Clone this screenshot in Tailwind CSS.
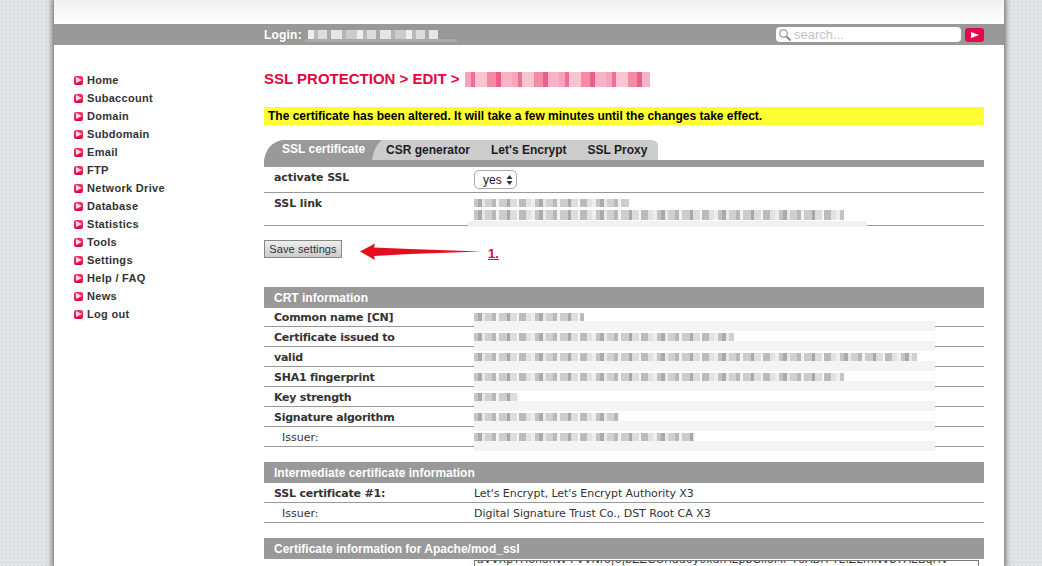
<!DOCTYPE html>
<html lang="en">
<head>
  <meta charset="UTF-8" />
  <title>SSL Protection</title>
  <script src="https://cdn.jsdelivr.net/npm/@tailwindcss/browser@4"></script>
</head>
<body class="h-[566px] overflow-hidden bg-[#e3e4e6] bg-[radial-gradient(#d9dadc_1px,transparent_1px)] bg-[length:4px_4px] font-['Liberation_Sans',sans-serif]">
  <div class="ml-[54px] w-[950px] h-[566px] overflow-hidden bg-white shadow-[0_0_5px_2px_#777]">
    <!-- top -->
    <div class="h-[24px] bg-gradient-to-b from-[#f1f1f1] to-white"></div>
    <div class="h-[21px] bg-[#999] flex items-center pl-[210px] pr-[20px]">
      <span class="text-[12px] font-bold text-white tracking-[0.2px]">Login:</span>
      <span class="relative ml-[6px] w-[130px] h-[9px] blur-[0.7px] bg-[repeating-linear-gradient(90deg,#eee_0_6px,#bbb_6px_10px,#ddd_10px_19px,#aaa_19px_23px,#e6e6e6_23px_34px,#b4b4b4_34px_38px,#ccc_38px_49px)]">
        <span class="absolute left-[-3px] top-[9px] w-[152px] h-[3px] bg-[#aaa]"></span>
      </span>
      <div class="ml-auto flex items-center gap-[4px]">
        <div class="w-[185px] h-[15px] bg-white rounded-[4px] flex items-center pl-[2px] gap-[2px]">
          <svg width="14" height="14" viewBox="0 0 14 14" fill="none" stroke="#aaa"><circle cx="5.500" cy="5.500" r="3.800" stroke-width="1.500"/><path d="M8.500 8.500l4 4" stroke="#888" stroke-width="2"/></svg>
          <span class="text-[13px] text-[#c4c4c4] leading-none">search...</span>
        </div>
        <div class="w-[19px] h-[14px] bg-[#e5094a] rounded-[3px] flex items-center justify-center">
          <svg width="8" height="6" viewBox="0 0 8 6"><path d="M0 0l8 3-8 3z" fill="#fff"/></svg>
        </div>
      </div>
    </div>

    <div class="flex">
      <!-- nav -->
      <ul id="nav" class="w-[210px] pl-[20px] pt-[26px] shrink-0"></ul>

      <!-- content -->
      <main class="w-[720px] pt-[25px]">
        <h1 class="flex items-center h-[18px] text-[15px] font-bold text-[#e3063f]">
          SSL PROTECTION &gt; EDIT &gt;
          <span class="ml-[5px] w-[185px] h-[15px] blur-[0.5px] bg-[repeating-linear-gradient(90deg,#f7a3bb_0_6px,#f06f94_6px_10px,#fbc4d3_10px_22px,#f48aa8_22px_31px,#ec5f88_31px_36px,#f9b3c7_36px_47px)]"></span>
        </h1>
        <div class="mt-[19px] h-[18px] pl-[4px] flex items-center bg-[#ffff33] text-[12px] font-bold text-black">The certificate has been altered. It will take a few minutes until the changes take effect.</div>

        <!-- tabs -->
        <div class="mt-[15px] flex h-[20px] text-[12px] font-bold">
          <div class="relative z-10 w-[118px] h-[20px] pl-[18px] bg-[#999] text-white [clip-path:path('M0_20Q3_3_18_0L118_0Q110_6_108_20Z')]">SSL certificate</div>
          <div class="-ml-[10px] w-[286px] h-[20px] pl-[14px] pt-[1px] flex gap-[21px] bg-[#ccc] text-[#1c1c1c] rounded-tr-[6px]">
            <span>CSR generator</span><span>Let's Encrypt</span><span>SSL Proxy</span>
          </div>
        </div>
        <div class="h-[7px] bg-[#999]"></div>

        <div class="flex h-[26px] border-b border-[#999] text-[11px] text-[#333]">
          <div class="w-[210px] pl-[10px] pt-[3px] font-bold tracking-[-0.1px] font-['DejaVu_Sans',sans-serif]">activate SSL</div>
          <div class="pt-[3px]">
            <div class="w-[43px] h-[19px] pl-[8px] pr-[3px] flex items-center justify-between border border-[#aaa] rounded-[5px] text-[12px] text-[#222]">yes
              <svg width="7" height="10" viewBox="0 0 7 10" fill="#333"><path d="M3.500 0l3 4h-6zM3.500 10l3-4h-6z"/></svg>
            </div>
          </div>
        </div>
        <div class="relative flex h-[33px] border-b border-[#999] text-[11px] text-[#333]">
          <div class="w-[210px] pl-[10px] pt-[3px] font-bold tracking-[-0.1px] font-['DejaVu_Sans',sans-serif]">SSL link</div>
          <div class="pt-[6px]">
            <div class="w-[155px] h-[8px] blur-[0.7px] bg-[repeating-linear-gradient(90deg,#c4c4c4_0_4px,#aaa_4px_8px,#e8e8e8_8px_11px,#d0d0d0_11px_18px,#b8b8b8_18px_22px,#f2f2f2_22px_25px,#ccc_25px_33px,#a8a8a8_33px_36px,#ddd_36px_43px,#f6f6f6_43px_45px,#bbb_45px_52px,#e2e2e2_52px_57px,#eee_57px_61px)]"></div>
            <div class="mt-[3px] w-[370px] h-[10px] blur-[0.7px] bg-[repeating-linear-gradient(90deg,#c4c4c4_0_4px,#aaa_4px_8px,#e8e8e8_8px_11px,#d0d0d0_11px_18px,#b8b8b8_18px_22px,#f2f2f2_22px_25px,#ccc_25px_33px,#a8a8a8_33px_36px,#ddd_36px_43px,#f6f6f6_43px_45px,#bbb_45px_52px,#e2e2e2_52px_57px,#eee_57px_61px)]"></div>
          </div>
          <div class="absolute left-[204px] top-[28px] w-[399px] h-[6px] bg-[#f1f1f1]"></div>
        </div>

        <div class="mt-[14px] h-[24px] flex items-start">
          <button class="w-[78px] h-[18px] border border-[#888] bg-gradient-to-b from-[#eee] to-[#ccc] text-[11px] text-[#333] tracking-[0.1px]">Save settings</button>
          <svg class="ml-[18px] mt-[3px]" width="122" height="18" viewBox="0 0 122 18"><path d="M0 8.500L15 .5 14 4.500 50 6 121 8.500 50 11 14 13 15 17z" fill="#e30f20"/></svg>
          <span class="ml-[6px] mt-[4px] text-[13px] font-bold text-[#e3063f] underline">1.</span>
        </div>

        <section class="mt-[23px]">
          <h2 class="h-[21px] pl-[10px] flex items-center bg-[#999] text-[12px] font-bold text-white">CRT information</h2>
          <div id="crt" class="-mt-px"></div>
        </section>

        <section class="mt-[15px]">
          <h2 class="h-[21px] pl-[10px] flex items-center bg-[#999] text-[12px] font-bold text-white">Intermediate certificate information</h2>
          <div class="flex h-[20px] pt-[4px] items-center border-b border-[#999] text-[11px] text-[#333] font-['DejaVu_Sans',sans-serif]">
            <div class="w-[210px] pl-[10px] font-bold tracking-[-0.2px]">SSL certificate #1:</div>
            <div class="tracking-[-0.07px]">Let's Encrypt, Let's Encrypt Authority X3</div>
          </div>
          <div class="flex h-[20px] pt-[4px] items-center border-b border-[#999] text-[11px] text-[#333] font-['DejaVu_Sans',sans-serif]">
            <div class="w-[210px] pl-[18px]">Issuer:</div>
            <div class="tracking-[-0.03px]">Digital Signature Trust Co., DST Root CA X3</div>
          </div>
        </section>

        <section class="mt-[15px]">
          <h2 class="h-[21px] pl-[10px] flex items-center bg-[#999] text-[12px] font-bold text-white">Certificate information for Apache/mod_ssl</h2>
          <div class="flex text-[11px] text-[#333] font-['DejaVu_Sans',sans-serif]">
            <div class="w-[210px] pl-[10px] pt-[4px] font-bold">CSR</div>
            <div class="mt-px w-[505px] h-[40px] border border-[#777] pl-[2px] leading-none overflow-hidden whitespace-nowrap"><div class="-mt-[7px]">aVVXpTHohohW FVVNro|6|bZZGOrlad0y0kdrAEpbGlloMr Y6ABH TEiZEmNVb7AEBqHV</div></div>
          </div>
        </section>
      </main>
    </div>
  </div>

  <script>
    const navItems = ['Home', 'Subaccount', 'Domain', 'Subdomain', 'Email', 'FTP', 'Network Drive', 'Database', 'Statistics', 'Tools', 'Settings', 'Help / FAQ', 'News', 'Log out'];
    document.getElementById('nav').innerHTML = navItems.map(name => `
      <li class="flex items-center h-[18px] gap-[4px] text-[11px] font-bold text-[#333] tracking-[0.3px]">
        <span class="w-[9px] h-[9px] shrink-0 rounded-[2px] bg-gradient-to-b from-[#f3386c] to-[#d9043f] flex items-center justify-center">
          <svg width="6" height="6" viewBox="0 0 5 5"><path d="M0 0l5 2.500-5 2.500z" fill="#ffd9e3"/></svg>
        </span>
        ${name}
      </li>`).join('');

    const crtRows = [
      ['Common name [CN]', 110, false],
      ['Certificate issued to', 260, false],
      ['valid', 443, false],
      ['SHA1 fingerprint', 370, false],
      ['Key strength', 45, false],
      ['Signature algorithm', 145, false],
      ['Issuer:', 220, true]
    ];
    document.getElementById('crt').innerHTML = crtRows.map(([label, width, plain]) => `
      <div class="relative flex h-[20px] pt-[4px] items-center border-b border-[#999] text-[11px] text-[#333] font-['DejaVu_Sans',sans-serif]">
        <div class="${plain ? 'w-[210px] pl-[18px]' : 'w-[210px] pl-[10px] font-bold tracking-[-0.24px]'}">${label}</div>
        <div class="-mt-[3px] h-[8px] blur-[0.7px] bg-[repeating-linear-gradient(90deg,#c4c4c4_0_4px,#aaa_4px_8px,#e8e8e8_8px_11px,#d0d0d0_11px_18px,#b8b8b8_18px_22px,#f2f2f2_22px_25px,#ccc_25px_33px,#a8a8a8_33px_36px,#ddd_36px_43px,#f6f6f6_43px_45px,#bbb_45px_52px,#e2e2e2_52px_57px,#eee_57px_61px)]" style="width:${width}px"></div>
        <div class="absolute left-[210px] top-[14px] w-[461px] h-[10px] bg-[#f4f4f4]"></div>
      </div>`).join('');
  </script>
</body>
</html>
